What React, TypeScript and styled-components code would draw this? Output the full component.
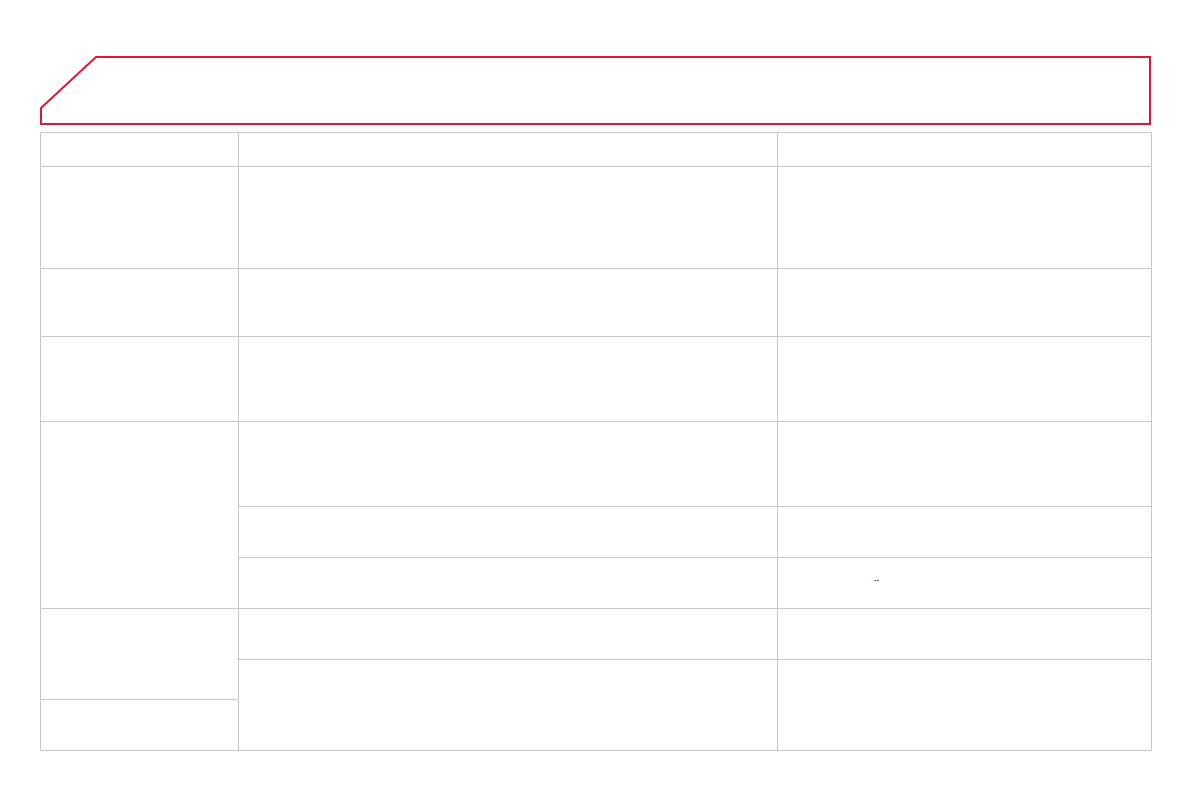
import React from 'react';
import styled, { createGlobalStyle } from 'styled-components';

// == styles =======================================================================================
const GlobalStyle = createGlobalStyle`
  html, body {
    margin: 0;
    padding: 0;
    background: #ffffff;
    font-family: "Liberation Sans", Arial, sans-serif;
  }
`;

const Page = styled.div`
  display: flex;
  flex-direction: column;
  gap: 7px;
  width: 1112px;
  padding: 56px 0 0 40px;
`;

const Header = styled.div`
  position: relative;
  width: 1111px;
  height: 69px;
`;

const HeaderFrame = styled.svg`
  position: absolute;
  inset: 0;
  width: 100%;
  height: 100%;
`;

const Table = styled.div`
  display: grid;
  grid-template-columns: 198px 539px 374px;
  grid-template-rows: 34px 102px 68px 85px 85px 51px 51px 51px 40px 51px;
  border-top: 1px solid #c8c8c8;
  border-left: 1px solid #c8c8c8;
  width: 1111px;
`;

const Cell = styled.div<{ col: number; row: number; span?: number }>`
  grid-column: ${ ( { col } ) => col };
  grid-row: ${ ( { row, span } ) => `${ row } / span ${ span ?? 1 }` };
  border-right: 1px solid #c8c8c8;
  border-bottom: 1px solid #c8c8c8;
  display: flex;
  align-items: center;
  padding-left: 96px;
`;

const Mark = styled.span`
  font-size: 8px;
  font-weight: bold;
  line-height: 1;
  color: #000000;
  letter-spacing: 0;
  margin-bottom: 5px;
`;

// == element ======================================================================================
const rows = [ 1, 2, 3, 4 ];

export default function App(): JSX.Element {
  return (
    <>
      <GlobalStyle />
      <Page>
        <Header>
          <HeaderFrame viewBox="0 0 1111 69" preserveAspectRatio="none">
            <path
              d="M56 1 H1110 V68 H1 V52 Z"
              fill="none"
              stroke="#e1173a"
              strokeWidth="2"
            />
          </HeaderFrame>
        </Header>
        <Table>
          { rows.map( ( r ) => (
            <React.Fragment key={ r }>
              <Cell col={ 1 } row={ r } />
              <Cell col={ 2 } row={ r } />
              <Cell col={ 3 } row={ r } />
            </React.Fragment>
          ) ) }
          <Cell col={ 1 } row={ 5 } span={ 3 } />
          <Cell col={ 2 } row={ 5 } />
          <Cell col={ 3 } row={ 5 } />
          <Cell col={ 2 } row={ 6 } />
          <Cell col={ 3 } row={ 6 } />
          <Cell col={ 2 } row={ 7 } />
          <Cell col={ 3 } row={ 7 }>
            <Mark>··</Mark>
          </Cell>
          <Cell col={ 1 } row={ 8 } span={ 2 } />
          <Cell col={ 2 } row={ 8 } />
          <Cell col={ 3 } row={ 8 } />
          <Cell col={ 1 } row={ 10 } />
          <Cell col={ 2 } row={ 9 } span={ 2 } />
          <Cell col={ 3 } row={ 9 } span={ 2 } />
        </Table>
      </Page>
    </>
  );
}
